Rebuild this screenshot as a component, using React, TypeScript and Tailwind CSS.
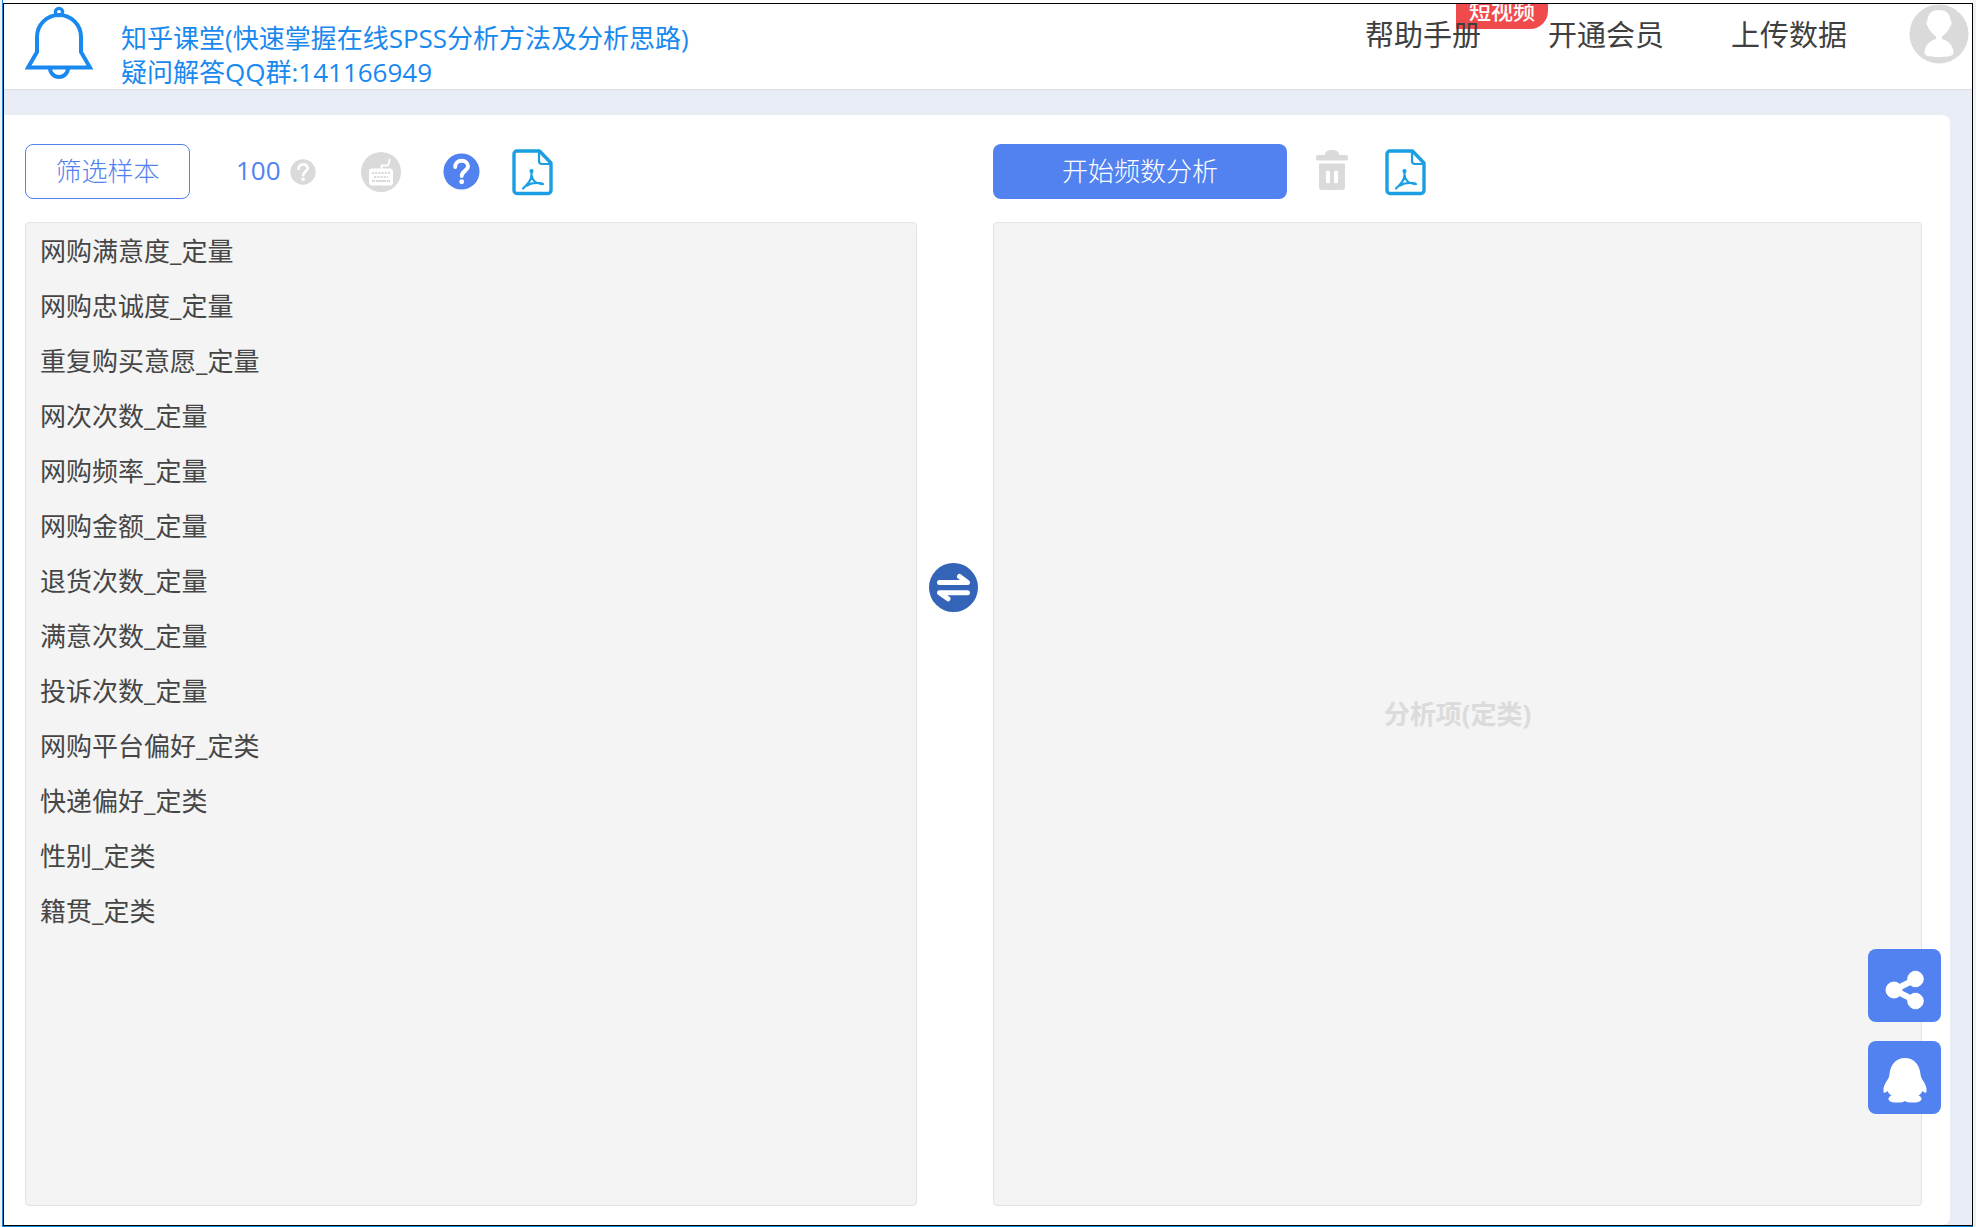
const variables = [
  '网购满意度_定量',
  '网购忠诚度_定量',
  '重复购买意愿_定量',
  '网次次数_定量',
  '网购频率_定量',
  '网购金额_定量',
  '退货次数_定量',
  '满意次数_定量',
  '投诉次数_定量',
  '网购平台偏好_定类',
  '快递偏好_定类',
  '性别_定类',
  '籍贯_定类',
];

const navItems = [
  { label: '帮助手册', badge: '短视频' },
  { label: '开通会员' },
  { label: '上传数据' },
];

function BellIcon() {
  return (
    <svg width="68" height="74" viewBox="0 0 68 74" fill="none" stroke="#1989f0" className="shrink-0">
      <circle cx="34" cy="7" r="3.6" strokeWidth="3.4" />
      <path d="M12 47V32a22 22 0 0 1 44 0v15l9 15.500H3L12 47Z" strokeWidth="4" />
      <path d="M25 63a9 9 0 0 0 18 0" strokeWidth="4" />
    </svg>
  );
}

function AvatarIcon() {
  return (
    <svg width="60" height="60" viewBox="0 0 60 60" className="block">
      <circle cx="30" cy="30" r="29.500" fill="#dadada" />
      <path
        d="M30 6c8 0 11.500 5 11.500 10.500 1.500 1 1.500 4 0 5.500-1.500 4.500-5.500 8-8.500 10.500v2.500c6 1.500 11.500 6.500 11.500 13.500C44.500 52.500 38 53 30 53s-14.500-.5-14.500-4.500c0-7 5.500-12 11.500-13.500v-2.500c-3-2.500-7-6-8.500-10.500-1.500-1.500-1.500-4.500 0-5.500C18.500 11 22 6 30 6Z"
        fill="#fff"
      />
    </svg>
  );
}

function HelpIcon({ size, fill }: { size: number; fill: string }) {
  return (
    <svg width={size} height={size} viewBox="0 0 38 38" fill="none" className="block">
      <circle cx="19" cy="19" r="18.500" fill={fill} />
      <path
        d="M12.500 14.500c0-4 2.800-6.500 6.700-6.500s6.500 2.400 6.500 5.700c0 4.600-6.500 4.800-6.500 10"
        stroke="#fff"
        strokeWidth="4"
        strokeLinecap="round"
      />
      <circle cx="19.200" cy="29.500" r="2.500" fill="#fff" />
    </svg>
  );
}

function KeyboardIcon() {
  return (
    <svg width="40" height="40" viewBox="0 0 40 40" fill="none" className="block">
      <circle cx="20" cy="20" r="20" fill="#dadada" />
      <path d="M20.500 17v-3.500h6c2 0 1-4 2.500-6.500" stroke="#fff" strokeWidth="1.800" />
      <rect x="8" y="16.500" width="24" height="17" rx="3" fill="#fff" />
      <path d="M11 21h18M13 25h14" stroke="#dadada" strokeWidth="2" strokeDasharray="2 1.200" />
      <path d="M11 29h18" stroke="#dadada" strokeWidth="1.800" strokeDasharray="3 1 10 1" />
    </svg>
  );
}

function PdfIcon() {
  return (
    <svg width="42" height="48" viewBox="0 0 42 48" fill="none" stroke="#1b9fe2" strokeLinejoin="round" strokeLinecap="round" className="block">
      <path d="M5 3h22.500L39 15v27.500a3 3 0 0 1-3 3H5a3 3 0 0 1-3-3V6a3 3 0 0 1 3-3Z" strokeWidth="3.400" />
      <path d="M27 4v9a3 3 0 0 0 3 3h8" strokeWidth="2.200" />
      <path d="M19.500 23v4.500c0 5-4 9-8.500 13M19.800 28c0 3.500 4 8.500 11.200 8M15 37.500c4-2.500 10-3 15.500-2" strokeWidth="2.200" />
      <circle cx="19.500" cy="23" r="1.300" strokeWidth="1.600" />
    </svg>
  );
}

function TrashIcon() {
  return (
    <svg width="32" height="42" viewBox="0 0 32 42" className="block" fill="#dadada">
      <path d="M2 6h6.500c1-3.500 3-5 6-5h3c3 0 5 1.500 6 5H30a2 2 0 0 1 2 2v1.500a2 2 0 0 1-2 2H2a2 2 0 0 1-2-2V8a2 2 0 0 1 2-2Z" />
      <path
        fillRule="evenodd"
        d="M3 14.500h26V38a3 3 0 0 1-3 3H6a3 3 0 0 1-3-3V14.500Zm9 7a2 2 0 0 0-2 2v9a2 2 0 0 0 4 0v-9a2 2 0 0 0-2-2Zm8 0a2 2 0 0 0-2 2v9a2 2 0 0 0 4 0v-9a2 2 0 0 0-2-2Z"
      />
    </svg>
  );
}

function SwapIcon() {
  return (
    <svg width="49" height="49" viewBox="0 0 49 49" className="block">
      <circle cx="24.500" cy="24.500" r="24.500" fill="#3464b8" />
      <path d="M10.500 19.500H38.500L30.500 13.500M38.500 29.800H10.500L19 35.800" fill="none" stroke="#fff" strokeWidth="5" strokeLinecap="round" strokeLinejoin="round" />
    </svg>
  );
}

function ShareIcon() {
  return (
    <svg width="42" height="42" viewBox="0 0 42 42" fill="#fff" stroke="#fff">
      <path d="M32 10 10 21l22 11" fill="none" strokeWidth="6" />
      <circle cx="31.500" cy="10" r="7.800" />
      <circle cx="10" cy="21" r="8" />
      <circle cx="31.500" cy="32" r="7.800" />
    </svg>
  );
}

function QQIcon() {
  return (
    <svg width="46" height="48" viewBox="0 0 46 48" fill="#fff">
      <path d="M23 2C13.500 2 8.500 9 7.500 18c-.2 2-.5 3-1.500 5C2.500 28 1 31.500 1.500 35.500c.3 2.500 2 1 4-.5.800 2 2.500 3.500 4 4.500-4.500 2-4.500 6.500 3.500 7 5 .3 8 0 10-1.500 2 1.500 5 1.800 10 1.500 8-.5 8-5 3.500-7 1.500-1 3.200-2.500 4-4.500 2 1.500 3.700 3 4 .5.500-4-1-7.500-4.500-12.500-1-2-1.300-3-1.500-5C37.500 9 32.500 2 23 2Z" />
    </svg>
  );
}

function Header() {
  return (
    <header className="flex h-[86px] shrink-0 justify-between overflow-hidden border-b border-[#dddde0] bg-white pl-[21px] pr-[3px]">
      <div className="flex gap-7">
        <div className="pt-px">
          <BellIcon />
        </div>
        <div className="pt-[17px] text-[26px] leading-[34px] text-[#1989f0]">
          <a href="#class" className="block">知乎课堂(快速掌握在线SPSS分析方法及分析思路)</a>
          <p>疑问解答QQ群:141166949</p>
        </div>
      </div>
      <div className="flex items-start gap-[62px]">
        <nav className="flex gap-[67px]">
          {navItems.map((item) => (
            <a key={item.label} href="#nav" className="relative pt-[10px] text-[29px] leading-[42px] text-[#3f3f3f]">
              {item.badge && (
                <span className="absolute left-[91px] top-0 flex h-[25px] w-[92px] items-end justify-center overflow-hidden rounded-br-[18px] bg-[#f04b4c] pb-[6px] text-[22px] font-medium leading-[26px] text-white">
                  {item.badge}
                </span>
              )}
              <span className="relative">{item.label}</span>
            </a>
          ))}
        </nav>
        <button type="button" aria-label="个人中心">
          <AvatarIcon />
        </button>
      </div>
    </header>
  );
}

function SourceColumn() {
  return (
    <section className="flex flex-col gap-[23px]">
      <div className="flex h-[55px] items-center">
        <button type="button" className="h-full w-[165px] rounded-lg border border-[#5182f0] text-[26px] font-light text-[#5182f0]">
          筛选样本
        </button>
        <div className="ml-[46px] flex items-center gap-[9px]">
          <span className="pb-1 text-[26px] leading-8 text-[#5182f0]">100</span>
          <HelpIcon size={26} fill="#dadada" />
        </div>
        <button type="button" aria-label="键盘" className="ml-[45px]">
          <KeyboardIcon />
        </button>
        <button type="button" aria-label="帮助" className="ml-[42px]">
          <HelpIcon size={37} fill="#5182f0" />
        </button>
        <button type="button" aria-label="PDF" className="ml-8">
          <PdfIcon />
        </button>
      </div>
      <ul className="flex-1 rounded-[4px] border border-[#e3e3e3] bg-[#f4f4f4] px-[14px] pt-px text-[26px] leading-[55px] text-[#464646]">
        {variables.map((name) => (
          <li key={name}>{name}</li>
        ))}
      </ul>
    </section>
  );
}

function TargetColumn() {
  return (
    <section className="flex flex-col gap-[23px]">
      <div className="flex h-[55px] items-center">
        <button type="button" className="h-full w-[294px] rounded-lg bg-[#5182f0] text-[26px] font-light text-white">
          开始频数分析
        </button>
        <button type="button" aria-label="删除" className="ml-[29px] pb-1">
          <TrashIcon />
        </button>
        <button type="button" aria-label="PDF" className="ml-[37px]">
          <PdfIcon />
        </button>
      </div>
      <div className="flex flex-1 items-center justify-center rounded-[4px] border border-[#e3e3e3] bg-[#f4f4f4] text-[26px] font-bold text-[#dbdbdb]">
        分析项(定类)
      </div>
    </section>
  );
}

export default function App() {
  return (
    <div className="flex min-h-screen flex-col bg-[#f1f1f1] pl-[2px] pr-[3px] font-['Open_Sans','Noto_Sans_CJK_SC',sans-serif]">
      <div className="flex flex-1 flex-col border-b border-l border-[#1989dc] bg-white pt-[3px]">
        <div className="flex flex-1 flex-col border border-black bg-[#e9edf6]">
          <Header />
          <main className="mr-[22px] mt-[25px] grid flex-1 grid-cols-[892fr_76px_929fr] rounded-r-lg bg-white pb-[19px] pl-[21px] pr-[28px] pt-[29px]">
            <SourceColumn />
            <div className="flex items-start pl-3 pt-[419px]">
              <button type="button" aria-label="移动">
                <SwapIcon />
              </button>
            </div>
            <TargetColumn />
          </main>
        </div>
      </div>

      {/* Floating shortcuts */}
      <div className="fixed bottom-[113px] right-[35px] flex flex-col gap-[19px]">
        <button type="button" aria-label="分享" className="flex size-[73px] items-center justify-center rounded-lg bg-[#5182f0] pt-2">
          <ShareIcon />
        </button>
        <button type="button" aria-label="QQ" className="flex size-[73px] items-center justify-center rounded-lg bg-[#5182f0] pt-1">
          <QQIcon />
        </button>
      </div>
    </div>
  );
}
